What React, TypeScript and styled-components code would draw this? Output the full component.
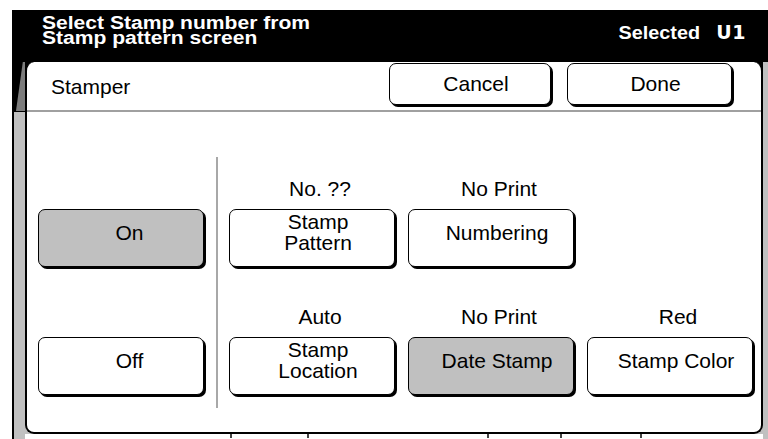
import React from "react";
import styled, { createGlobalStyle } from "styled-components";

const GlobalStyle = createGlobalStyle`
  html, body { margin: 0; padding: 0; background: #fff; }
  body { font-family: "Liberation Sans", Arial, sans-serif; color: #000; }
  #root { width: 768px; height: 439px; overflow: hidden; }
`;

const Page = styled.div`
  width: 768px;
  height: 439px;
  box-sizing: border-box;
  padding: 10px 0 0 12px;
  background: #fff;
`;

const Frame = styled.div`
  height: 429px;
  display: flex;
  flex-direction: column;
  background: #000;
`;

const Header = styled.header`
  height: 52px;
  flex: none;
  display: flex;
  justify-content: space-between;
  align-items: flex-start;
  color: #fff;
  padding: 0 22px 0 30px;
  box-sizing: border-box;
  font-weight: bold;
`;

const HeaderTitle = styled.div`
  padding-top: 6px;
  font-size: 18px;
  line-height: 15px;
  white-space: nowrap;
  transform: scaleX(1.17);
  transform-origin: left top;
`;

const HeaderStatus = styled.div`
  margin-top: 15px;
  display: flex;
  align-items: baseline;
  white-space: nowrap;
`;

const StatusLabel = styled.span`
  display: inline-block;
  font-size: 18px;
  line-height: 15px;
  transform: scaleX(1.1);
  transform-origin: right center;
`;

const StatusCode = styled.span`
  margin-left: 16px;
  font-family: "DejaVu Sans", "Liberation Sans", sans-serif;
  font-size: 19px;
  line-height: 15px;
  letter-spacing: 0.5px;
`;

const Body = styled.div`
  flex: 1;
  display: flex;
  padding-left: 2px;
`;

const LeftStrip = styled.div`
  width: 11px;
  flex: none;
  display: flex;
  flex-direction: column;
`;

const StripBevel = styled.div`
  height: 49px;
  flex: none;
  background: #000;
  border-bottom: 1px solid #000;
  &::before {
    content: "";
    display: block;
    height: 100%;
    background: #7c7c7c;
    clip-path: polygon(80% 0, 100% 0, 100% 100%, 18% 100%);
  }
`;

const StripRest = styled.div`
  flex: 1;
  background: #c0c0c0;
`;

const RightStrip = styled.div`
  width: 5px;
  flex: none;
  background: #c0c0c0;
`;

const PanelColumn = styled.div`
  flex: 1;
  display: flex;
  flex-direction: column;
  background: linear-gradient(#000 0 10px, #c0c0c0 10px);
`;

const Panel = styled.section`
  flex: 1;
  display: flex;
  flex-direction: column;
  background: #fff;
  border: 2px solid #000;
  border-top: 0;
  border-radius: 9px;
  box-sizing: border-box;
`;

const TitleRow = styled.div`
  height: 48px;
  flex: none;
  display: flex;
  align-items: flex-start;
  gap: 16px;
  padding: 1px 29px 0 24px;
  box-sizing: border-box;
`;

const Title = styled.div`
  flex: 1;
  align-self: center;
  font-size: 21px;
  line-height: 24px;
`;

const Rule = styled.div`
  height: 2px;
  flex: none;
  background: #a0a0a0;
`;

const Content = styled.div`
  flex: 1;
  display: flex;
  align-items: flex-start;
  padding: 45px 0 0 11px;
`;

const LeftCol = styled.div`
  width: 168px;
  flex: none;
  margin-right: 10px;
  padding-top: 21px;
  display: grid;
  row-gap: 39px;
`;

const Divider = styled.div`
  width: 2px;
  height: 251px;
  flex: none;
  margin-right: 11px;
  background: #a8a8a8;
`;

const OptionGrid = styled.div`
  padding-top: 21px;
  display: grid;
  grid-template-columns: repeat(3, 168px);
  column-gap: 11px;
  row-gap: 39px;
`;

const Cell = styled.div`
  display: flex;
  flex-direction: column;
`;

const Label = styled.div`
  height: 22px;
  margin-bottom: 9px;
  padding-left: 14px;
  box-sizing: border-box;
  font-size: 21px;
  line-height: 22px;
  text-align: center;
  white-space: nowrap;
`;

const Button = styled.button<{ $active?: boolean; $shift?: number }>`
  width: 166px;
  height: 58px;
  margin: 0;
  padding: 0 0 12px ${(p) => p.$shift ?? 12}px;
  box-sizing: border-box;
  display: flex;
  align-items: center;
  justify-content: center;
  text-align: center;
  font-family: "Liberation Sans", Arial, sans-serif;
  font-size: 21px;
  line-height: 21px;
  color: #000;
  background: ${(p) => (p.$active ? "#c0c0c0" : "#fff")};
  border: 1px solid #000;
  border-radius: 7px;
  box-shadow: 2px 2px 0 #000;
  cursor: pointer;
`;

const BarButton = styled(Button)<{ $w: number }>`
  width: ${(p) => p.$w}px;
  height: 42px;
  flex: none;
  padding: 0 0 2px 12px;
`;

const BottomEdge = styled.div`
  height: 5px;
  flex: none;
  display: flex;
  align-items: flex-start;
  background: #fff;
`;

const Tick = styled.span<{ $gap: number }>`
  width: 2px;
  height: 4px;
  flex: none;
  margin-left: ${(p) => p.$gap}px;
  background: #444;
`;

type Option = { label: string; text: React.ReactNode; active?: boolean };

const options: Option[] = [
  { label: "No. ??", text: <>Stamp<br />Pattern</> },
  { label: "No Print", text: "Numbering" },
  { label: "", text: null },
  { label: "Auto", text: <>Stamp<br />Location</> },
  { label: "No Print", text: "Date Stamp", active: true },
  { label: "Red", text: "Stamp Color" },
];

const tickGaps = [205, 75, 178, 71, 78];

export default function App() {
  return (
    <>
      <GlobalStyle />
      <Page>
        <Frame>
          <Header>
            <HeaderTitle>
              Select Stamp number from
              <br />
              Stamp pattern screen
            </HeaderTitle>
            <HeaderStatus>
              <StatusLabel>Selected</StatusLabel>
              <StatusCode>U1</StatusCode>
            </HeaderStatus>
          </Header>
          <Body>
            <LeftStrip>
              <StripBevel />
              <StripRest />
            </LeftStrip>
            <PanelColumn>
              <Panel>
                <TitleRow>
                  <Title>Stamper</Title>
                  <BarButton $w={162}>Cancel</BarButton>
                  <BarButton $w={165}>Done</BarButton>
                </TitleRow>
                <Rule />
                <Content>
                  <LeftCol>
                    <Cell>
                      <Label />
                      <Button $active $shift={17}>On</Button>
                    </Cell>
                    <Cell>
                      <Label />
                      <Button $shift={17}>Off</Button>
                    </Cell>
                  </LeftCol>
                  <Divider />
                  <OptionGrid>
                    {options.map((o, i) => (
                      <Cell key={i}>
                        <Label>{o.label}</Label>
                        {o.text !== null && <Button $active={o.active}>{o.text}</Button>}
                      </Cell>
                    ))}
                  </OptionGrid>
                </Content>
              </Panel>
              <BottomEdge>
                {tickGaps.map((g, i) => (
                  <Tick key={i} $gap={g} />
                ))}
              </BottomEdge>
            </PanelColumn>
            <RightStrip />
          </Body>
        </Frame>
      </Page>
    </>
  );
}
